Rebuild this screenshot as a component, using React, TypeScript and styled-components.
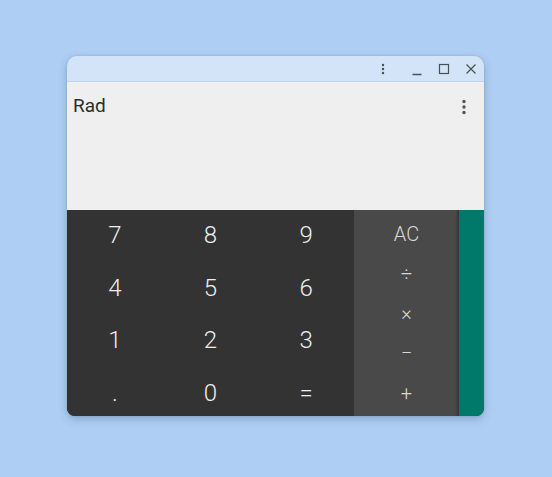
import React from "react"
import styled, { createGlobalStyle } from "styled-components"

const GlobalStyle = createGlobalStyle`
  html, body {
    margin: 0;
    padding: 0;
    background: #aecff3;
    font-family: Roboto, "Noto Sans", "Liberation Sans", sans-serif;
  }
`

const digits = ["7", "8", "9", "4", "5", "6", "1", "2", "3", ".", "0", "="]
const ops = ["AC", "÷", "×", "−", "+"]

export default function App() {
  return (
    <>
      <GlobalStyle />
      <Styled.Page>
        <Styled.Window>
          <Styled.TitleBar>
            <Styled.TitleButton>
              <svg width="12" height="14" viewBox="0 0 12 14">
                <circle cx="6" cy="3" r="1.2" fill="#4a4f55" />
                <circle cx="6" cy="7" r="1.2" fill="#4a4f55" />
                <circle cx="6" cy="11" r="1.2" fill="#4a4f55" />
              </svg>
            </Styled.TitleButton>
            <Styled.Spacer />
            <Styled.TitleButton>
              <svg width="12" height="14" viewBox="0 0 12 14">
                <path d="M1.5 12.5h9" stroke="#4a4f55" strokeWidth="1.4" />
              </svg>
            </Styled.TitleButton>
            <Styled.TitleButton>
              <svg width="12" height="14" viewBox="0 0 12 14">
                <rect x="1.5" y="2.5" width="9" height="9" fill="none" stroke="#4a4f55" strokeWidth="1.2" />
              </svg>
            </Styled.TitleButton>
            <Styled.TitleButton>
              <svg width="12" height="14" viewBox="0 0 12 14">
                <path d="M1.5 2.5l9 9M10.5 2.5l-9 9" stroke="#4a4f55" strokeWidth="1.2" />
              </svg>
            </Styled.TitleButton>
          </Styled.TitleBar>
          <Styled.Display>
            <Styled.Mode>Rad</Styled.Mode>
            <Styled.MenuButton>
              <svg width="6" height="16" viewBox="0 0 6 16">
                <circle cx="3" cy="2.5" r="1.7" fill="#555" />
                <circle cx="3" cy="8" r="1.7" fill="#555" />
                <circle cx="3" cy="13.5" r="1.7" fill="#555" />
              </svg>
            </Styled.MenuButton>
          </Styled.Display>
          <Styled.Keypad>
            <Styled.Digits>
              {digits.map((d) => (
                <Styled.Key key={d}>{d}</Styled.Key>
              ))}
            </Styled.Digits>
            <Styled.Ops>
              {ops.map((o) => (
                <Styled.OpKey key={o}>{o}</Styled.OpKey>
              ))}
            </Styled.Ops>
            <Styled.Drawer />
          </Styled.Keypad>
        </Styled.Window>
      </Styled.Page>
    </>
  )
}

const Styled = {
  Page: styled.div`
    display: flex;
    justify-content: flex-start;
    padding: 56px 0 0 67px;
    height: 477px;
    box-sizing: border-box;
  `,
  Window: styled.div`
    width: 417px;
    height: 360px;
    border-radius: 10px 10px 8px 8px;
    overflow: hidden;
    display: flex;
    flex-direction: column;
    box-shadow: 0 3px 8px rgba(40, 70, 110, 0.3), 0 0 2px rgba(40, 70, 110, 0.2);
  `,
  TitleBar: styled.div`
    height: 26px;
    flex-shrink: 0;
    background: #d3e4f8;
    border-bottom: 1px solid #c3d4ea;
    display: flex;
    align-items: center;
    justify-content: flex-end;
    box-sizing: border-box;
  `,
  TitleButton: styled.div`
    width: 27px;
    height: 26px;
    display: flex;
    align-items: center;
    justify-content: center;
  `,
  Spacer: styled.div`
    width: 7px;
  `,
  Display: styled.div`
    height: 128px;
    flex-shrink: 0;
    background: #efefef;
    display: flex;
    align-items: flex-start;
    justify-content: space-between;
    padding: 13px 17px 0 6px;
    box-sizing: border-box;
  `,
  Mode: styled.div`
    font-size: 19px;
    color: #2d2d2d;
    line-height: 22px;
  `,
  MenuButton: styled.div`
    margin-top: 4px;
    display: flex;
  `,
  Keypad: styled.div`
    flex: 1;
    min-height: 0;
    display: grid;
    grid-template-columns: 287px 105px 1fr;
    grid-template-rows: minmax(0, 1fr);
    background: #333333;
    overflow: hidden;
  `,
  Digits: styled.div`
    display: grid;
    grid-template-columns: repeat(3, 1fr);
    grid-template-rows: repeat(4, 52.5px);
    align-content: start;
    background: #333333;
  `,
  Key: styled.div`
    display: flex;
    align-items: center;
    justify-content: center;
    color: #eeeeee;
    font-size: 24px;
    font-weight: 300;
    padding-bottom: 2px;
  `,
  Ops: styled.div`
    display: grid;
    grid-template-rows: repeat(5, 39.75px);
    align-content: start;
    padding-top: 4px;
    background: #494949;
  `,
  OpKey: styled.div`
    display: flex;
    align-items: center;
    justify-content: center;
    color: #d8d8d8;
    font-size: 20px;
    font-weight: 300;
  `,
  Drawer: styled.div`
    background: #01796a;
    box-shadow: -2px 0 2px rgba(0, 0, 0, 0.25);
  `,
}
